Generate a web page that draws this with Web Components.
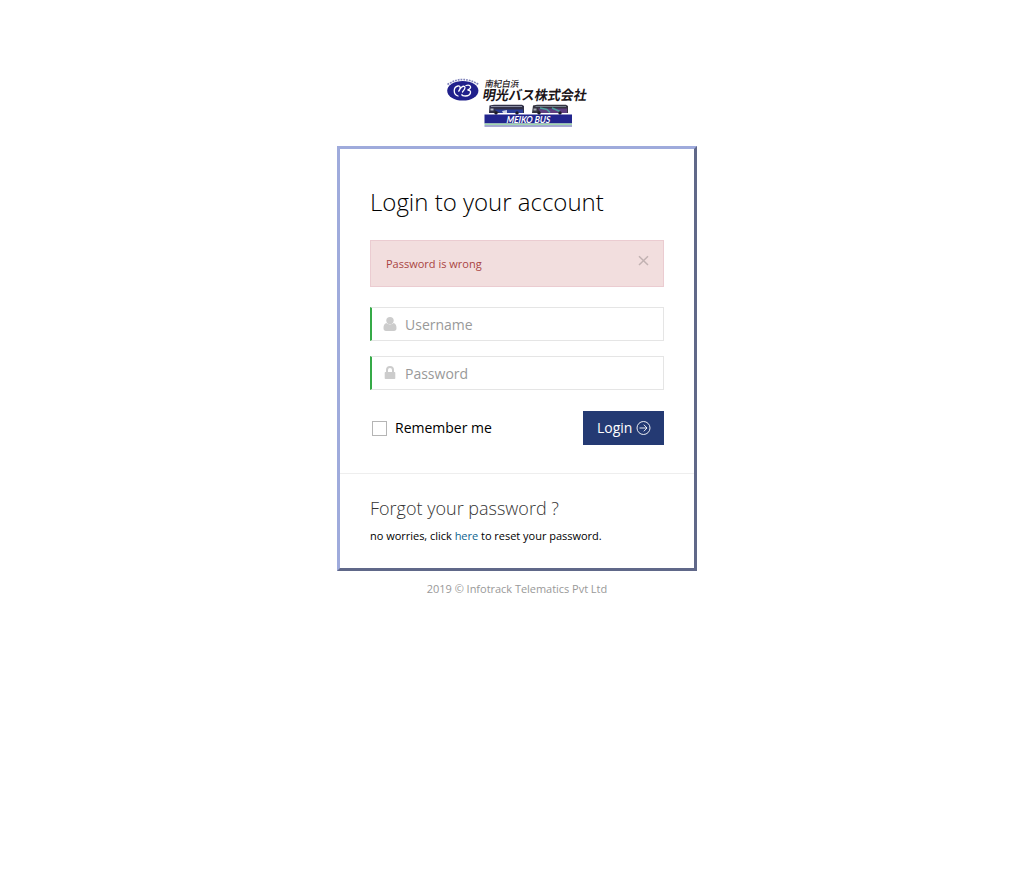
<!DOCTYPE html>
<html lang="en">
<head>
<meta charset="utf-8">
<title>Login</title>
<style>
html,body{margin:0;background:#fff}
body{font-family:"Open Sans","Noto Sans CJK JP",sans-serif;color:#000;font-size:13px}
</style>
</head>
<body>
<login-page></login-page>
<script>
const define = (name, html) => customElements.define(name, class extends HTMLElement {
  constructor() {
    super();
    const t = document.createElement('template');
    t.innerHTML = html;
    this.attachShadow({mode: 'open'}).append(t.content.cloneNode(true));
  }
});

define('brand-logo', `
<style>
:host{display:block;width:155px;height:65px}
svg{display:block}
text{font-family:"Noto Sans CJK JP",sans-serif}
</style>
<svg width="155" height="65" viewBox="0 0 155 65">
  <path d="M7.500 14.500Q22.500 4.500 38.500 14.500" fill="none" stroke="#8084bb" stroke-width="1.700" stroke-dasharray="1.800 1"/>
  <ellipse cx="22.800" cy="20.800" rx="15.600" ry="9.800" fill="#20208c"/>
  <path d="M18 26C13 24.500 13 17 18 16C21 15.500 20.500 19 18.500 21.500C20 18 23 15.500 24.500 16.500C26 17.500 24 20 22.500 22M26 15.500C31 14 32.500 18.500 27.500 20C32.500 20 31 26 25.500 26C23.500 26 21.500 25.500 22 24.500" fill="none" stroke="#fff" stroke-width="1.300" stroke-linecap="round"/>
  <g fill="#1c1518">
    <text transform="translate(44.5 16.600) skewX(-10)" font-size="8.800" font-weight="500" textLength="34" lengthAdjust="spacingAndGlyphs">南紀白浜</text>
    <text transform="translate(42 30.300) skewX(-10)" font-size="13.500" font-weight="700" textLength="104" lengthAdjust="spacingAndGlyphs">明光バス株式会社</text>
  </g>
  <path d="M49.500 35.500L54 34.800H82L84 36V43H49z" fill="#303047"/>
  <path d="M51 36H82V37H51z" fill="#898da3"/>
  <path d="M50.500 38.500h3v2h-3z" fill="#b9bdca"/>
  <path d="M54 39.500H83V43H60z" fill="#2a3c96"/>
  <path d="M62 41l5-1v3h-4z" fill="#cdd3e6"/>
  <path d="M93 35.500L97 34.800H126L128 36V43H92z" fill="#35333f"/>
  <path d="M96 36H126V37H95z" fill="#76808b"/>
  <path d="M93.500 38.500h3v2h-3z" fill="#a5a8b3"/>
  <path d="M98 38.500H127V43H101z" fill="#5f3f80"/>
  <path d="M100 38l7 1.500 3 3M112 38l8 3.500" fill="none" stroke="#4aa09c" stroke-width="1.500"/>
  <g fill="#1d1b26"><circle cx="56" cy="43" r="1.700"/><circle cx="77" cy="43" r="1.700"/><circle cx="99" cy="43" r="1.700"/><circle cx="120" cy="43" r="1.700"/></g>
  <path fill="#22258d" d="M44.500 44.600h87.500v9H44.500z"/>
  <path fill="#a2d9ae" d="M44.500 53.500h87.500v1.800H44.500z"/>
  <path fill="#8a8cc4" d="M44.500 55.300h87.500v1.500H44.500z"/>
  <text transform="translate(66 53) skewX(-12)" font-size="9.600" font-weight="700" fill="#fff" textLength="43.500" lengthAdjust="spacingAndGlyphs" style="font-family:Lato,sans-serif">MEIKO BUS</text>
</svg>`);

define('alert-box', `
<style>
:host{display:flex;justify-content:space-between;box-sizing:border-box;height:47px;border:1px solid #ebccd1;background:#f2dede;color:#a94442;font-size:11px;line-height:17px;padding:14px 14px 0 15px}
svg{display:block}
</style>
<span><slot></slot></span>
<svg width="11" height="11" viewBox="0 0 11 11"><path d="M1 1.300L10 10M10 1.300L1 10" stroke="#c2b2b2" stroke-width="1.500"/></svg>`);

define('icon-field', `
<style>
:host{display:flex;align-items:center;box-sizing:border-box;height:34px;border:1px solid #e5e5e5;border-left:2px solid #35aa47;padding-left:11px;background:#fff;color:#999;font-size:14px;line-height:20px}
.icon{display:flex;width:14px;height:16px;margin-right:8px;color:#ccc}
.label{padding-top:2px}
</style>
<span class="icon"><slot name="icon"></slot></span><span class="label"><slot></slot></span>`);

define('check-box', `
<style>
:host{display:flex;align-items:center;gap:8px;font-size:14px;line-height:20px;padding-left:2px}
i{box-sizing:border-box;width:15px;height:15px;border:1px solid #b5b5b5;background:#fff;margin-top:1px}
</style>
<i></i><slot></slot>`);

define('login-button', `
<style>
:host{display:flex;align-items:center;box-sizing:border-box;width:81px;height:34px;padding-left:14px;gap:3.500px;background:#243a73;color:#fff;font-size:14px;line-height:20px}
</style>
<slot></slot>
<svg width="15" height="15" viewBox="0 0 15 15" fill="none" stroke="#fff" stroke-width=".9"><circle cx="7.500" cy="7" r="6.500"/><path d="M3.500 7H11M7.800 3.700L11 7L7.800 10.300"/></svg>`);

define('login-card', `
<style>
:host{display:block;box-sizing:border-box;width:360px;height:425px;border:3px solid;border-color:#9fabdc #606889 #606889 #9fabdc;background:#fff}
.main{box-sizing:border-box;height:325px;padding:35px 30px 0;border-bottom:1px solid #eee}
h3{margin:0 0 21px;font-size:24px;font-weight:300;line-height:35px;white-space:nowrap}
alert-box{margin-bottom:20px}
icon-field{margin-bottom:15px}
.actions{display:flex;justify-content:space-between;padding-top:6px}
.forgot{padding:24px 30px 0}
h4{margin:0 0 8px;font-size:18px;font-weight:300;line-height:20px;color:#333;white-space:nowrap}
p{margin:0;font-size:11px;line-height:20px;white-space:nowrap;letter-spacing:-.02px}
a{color:#0d638f;text-decoration:none}
</style>
<div class="main">
  <h3>Login to your account</h3>
  <alert-box>Password is wrong</alert-box>
  <icon-field><svg slot="icon" width="14" height="16" viewBox="0 0 14 16" fill="currentColor"><path d="M3.500 7C1 7.500 .5 10 .5 12.200C.5 14 1.500 15 3 15H11C12.500 15 13.500 14 13.500 12.200C13.500 10 13 7.500 10.500 7C9.500 8 8.500 8.400 7 8.400S4.500 8 3.500 7z"/><circle cx="7" cy="4.600" r="3.700"/></svg>Username</icon-field>
  <icon-field><svg slot="icon" width="14" height="16" viewBox="0 0 14 16" fill="currentColor"><path fill-rule="evenodd" d="M3 7V5a4 4 0 0 1 8 0v2h.5q.8 0 .8.8v5.400q0 .8-.8.8h-9q-.8 0-.8-.8V7.800q0-.8.8-.8zM5 7h4V5a2 2 0 0 0-4 0z"/></svg>Password</icon-field>
  <div class="actions"><check-box>Remember me</check-box><login-button>Login</login-button></div>
</div>
<div class="forgot">
  <h4>Forgot your password ?</h4>
  <p>no worries, click <a>here</a> to reset your password.</p>
</div>`);

define('login-page', `
<style>
:host{display:flex;flex-direction:column;align-items:center;padding-top:70px}
brand-logo{margin-left:1px;margin-bottom:11px}
footer{padding-top:10px;font-size:11px;line-height:16px;color:#999;white-space:nowrap;letter-spacing:-.03px}
</style>
<brand-logo></brand-logo>
<login-card></login-card>
<footer>2019 © Infotrack Telematics Pvt Ltd</footer>`);
</script>
</body>
</html>
